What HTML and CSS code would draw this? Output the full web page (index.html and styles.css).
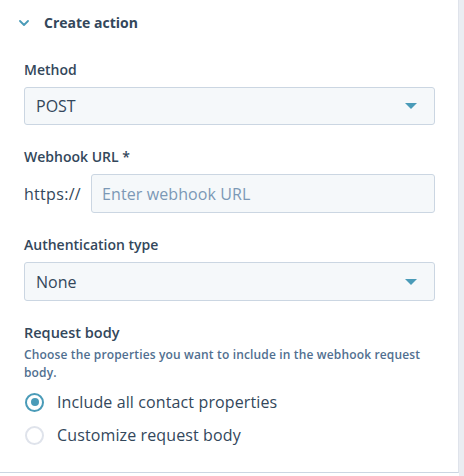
FILE: index.html
```html
<!DOCTYPE html>
<html>
<head>
<meta charset="utf-8">
<link rel="stylesheet" href="styles.css">
</head>
<body>
<div class="frame">
  <div class="panel">
    <div class="header">
      <svg class="chev" width="10" height="6" viewBox="0 0 10 6"><path d="M1 1 L5 5 L9 1" fill="none" stroke="#4a9bb8" stroke-width="1.8" stroke-linecap="round" stroke-linejoin="round"/></svg>
      <span class="title">Create action</span>
    </div>
    <div class="body">
      <div class="field">
        <div class="label">Method</div>
        <div class="select"><span>POST</span><span class="caret"></span></div>
      </div>
      <div class="field">
        <div class="label">Webhook URL *</div>
        <div class="urlrow">
          <span class="prefix">https://</span>
          <div class="input"><span class="ph">Enter webhook URL</span></div>
        </div>
      </div>
      <div class="field auth">
        <div class="label">Authentication type</div>
        <div class="select"><span>None</span><span class="caret"></span></div>
      </div>
      <div class="field rb">
        <div class="label">Request body</div>
        <div class="help">Choose the properties you want to include in the webhook request body.</div>
        <div class="radios">
          <label class="radio"><span class="dot on"></span><span>Include all contact properties</span></label>
          <label class="radio"><span class="dot"></span><span>Customize request body</span></label>
        </div>
      </div>
    </div>
  </div>
  <div class="scroll"></div>
</div>
</body>
</html>
```
FILE: styles.css
```css
html, body { margin: 0; padding: 0; background: #fff; }
body { font-family: "Open Sans", "Lato", sans-serif; color: #33475b; }
.frame { display: flex; width: 464px; height: 476px; }
.panel { width: 459px; height: 473px; border-right: 1px solid #dfe3eb; border-bottom: 1px solid #cbd6e2; box-sizing: border-box; }
.scroll { width: 5px; height: 476px; background: #eaedf2; }
.header { display: flex; align-items: center; height: 44px; padding-left: 19px; }
.chev { margin-right: 15px; margin-top: 1px; }
.title { font-size: 14px; font-weight: 700; }
.body { padding: 17px 23px 0 24px; }
.field { margin-bottom: 23px; }
.label { font-size: 14px; font-weight: 600; margin-bottom: 8px; line-height: 18px; }
.select { height: 38px; box-sizing: border-box; background: #f5f8fa; border: 1px solid #cbd6e2; border-radius: 3px; display: flex; align-items: center; justify-content: space-between; padding: 0 17px 0 11px; font-size: 16px; }
.auth .select { height: 39px; }
.caret { width: 0; height: 0; border-left: 6px solid transparent; border-right: 6px solid transparent; border-top: 6px solid #4a9bb8; }
.urlrow { display: flex; align-items: center; }
.prefix { font-size: 16px; width: 67px; letter-spacing: 0.3px; }
.input { flex: 1; height: 39px; box-sizing: border-box; background: #f5f8fa; border: 1px solid #cbd6e2; border-radius: 3px; display: flex; align-items: center; padding-left: 10px; }
.ph { font-size: 16px; color: #7c98b6; letter-spacing: 0.1px; }
.rb .label { margin-bottom: 4px; font-weight: 600; font-size: 14.5px; }
.help { font-size: 12px; letter-spacing: 0.15px; font-weight: 600; color: #516f90; line-height: 18px; margin-bottom: 10px; }
.radios { display: flex; flex-direction: column; gap: 13px; }
.radio { display: flex; align-items: center; font-size: 16px; letter-spacing: 0.12px; line-height: 20px; }
.dot { width: 19px; height: 19px; box-sizing: border-box; border: 2px solid #dfe3eb; border-radius: 50%; margin-left: 1px; margin-right: 13px; position: relative; }
.dot.on { border-color: #4a9bb8; }
.dot.on::after { content: ""; position: absolute; left: 3.5px; top: 3.5px; width: 8px; height: 8px; border-radius: 50%; background: #4a9bb8; }
```
